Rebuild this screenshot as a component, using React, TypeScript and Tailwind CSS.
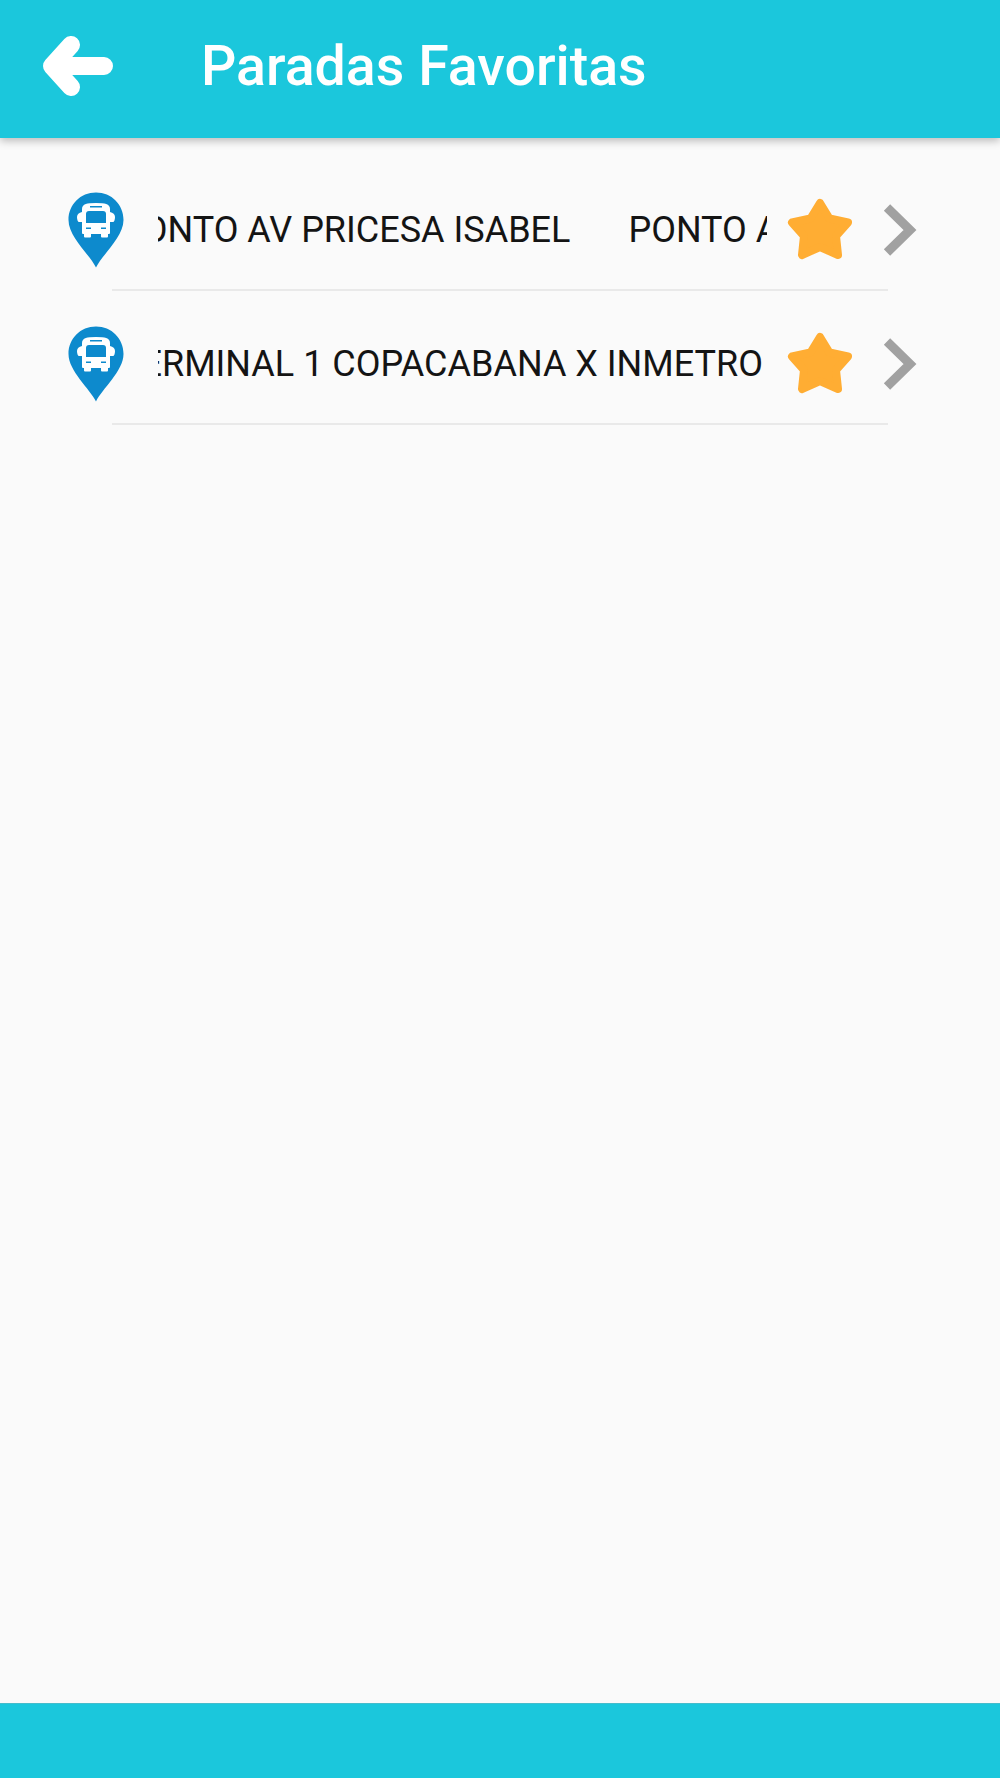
const stops = ["PONTO AV PRICESA ISABEL", "TERMINAL 1 COPACABANA X INMETRO"];

function BusPin() {
  return (
    <svg width="56" height="76" viewBox="0 0 56 76" className="shrink-0">
      <path
        d="M28 75.500C22 63 0.500 45 0.500 28 0.500 12.500 12.500 0.500 28 0.500S55.500 12.500 55.500 28C55.500 45 34 63 28 75.500Z"
        fill="#0d8acd"
      />
      {/* bus front */}
      <path
        d="M15 17C15 13 19 12 28 12S41 13 41 17V41H15Z"
        fill="#fff"
        stroke="#fff"
        strokeWidth="2"
        strokeLinejoin="round"
      />
      <rect x="16" y="41" width="7" height="4.500" rx="1" fill="#fff" />
      <rect x="33" y="41" width="7" height="4.500" rx="1" fill="#fff" />
      <path d="M9 25C9 22.500 11 20.500 14 20V30H11C10 30 9 28 9 25Z" fill="#fff" />
      <path d="M47 25C47 22.500 45 20.500 42 20V30H45C46 30 47 28 47 25Z" fill="#fff" />
      {/* windshield, roof sign and headlights */}
      <path d="M18 22C18 20 19 19 21 19H35C37 19 38 20 38 22V31H18Z" fill="#0d8acd" />
      <rect x="22" y="14" width="12" height="1.500" fill="#0d8acd" />
      <rect x="18" y="35.500" width="5" height="1.500" fill="#0d8acd" />
      <rect x="33" y="35.500" width="5" height="1.500" fill="#0d8acd" />
    </svg>
  );
}

function Star() {
  return (
    <svg width="66" height="64" viewBox="0 0 66 64" className="shrink-0">
      <path
        d="M33 5L42.500 20.500L61 24.500L49 38L51 57L33 49L15 57L17 38L5 24.500L23.500 20.500Z"
        fill="#ffad33"
        stroke="#ffad33"
        strokeWidth="8"
        strokeLinejoin="round"
      />
    </svg>
  );
}

function Chevron() {
  return (
    <svg width="34" height="52" viewBox="0 0 34 52" className="shrink-0">
      <path d="M4 3.500L27 26L4 48.500" fill="none" stroke="#a1a1a1" strokeWidth="9" />
    </svg>
  );
}

export default function App() {
  return (
    <div className="flex h-[1778px] flex-col bg-[#fafafa] font-['Roboto',sans-serif]">
      <header className="z-10 flex h-[138px] shrink-0 items-center bg-[#1bc7dc] pb-[6px] pl-[43px] shadow-[0_3px_8px_rgba(0,0,0,0.25)]">
        <svg width="70" height="60" viewBox="0 0 70 60" className="shrink-0">
          <path
            d="M28 9L9 30L28 51M9 30H61"
            fill="none"
            stroke="#fff"
            strokeWidth="18"
            strokeLinecap="round"
            strokeLinejoin="round"
          />
        </svg>
        <h1 className="mt-[2px] ml-[88px] text-[55.500px] leading-none font-medium text-white">
          Paradas Favoritas
        </h1>
      </header>

      <main className="flex-1 pt-[19px]">
        {stops.map((name) => (
          <div key={name}>
            <div className="flex h-[132px] items-center pt-[14px] pl-[68px]">
              <BusPin />
              <div className="ml-[34px] w-[609px] overflow-hidden">
                <div className="-ml-[38px] flex gap-[58px] text-[36px] leading-none whitespace-nowrap text-[#141414]">
                  <span>{name}</span>
                  <span>{name}</span>
                </div>
              </div>
              <div className="ml-[20px]">
                <Star />
              </div>
              <div className="ml-[30px]">
                <Chevron />
              </div>
            </div>
            <div className="ml-[112px] h-[2px] w-[776px] bg-[#e9e9e9]" />
          </div>
        ))}
      </main>

      <footer className="h-[75px] shrink-0 border-t border-[#45bccb] bg-[#1bc7dc]" />
    </div>
  );
}
